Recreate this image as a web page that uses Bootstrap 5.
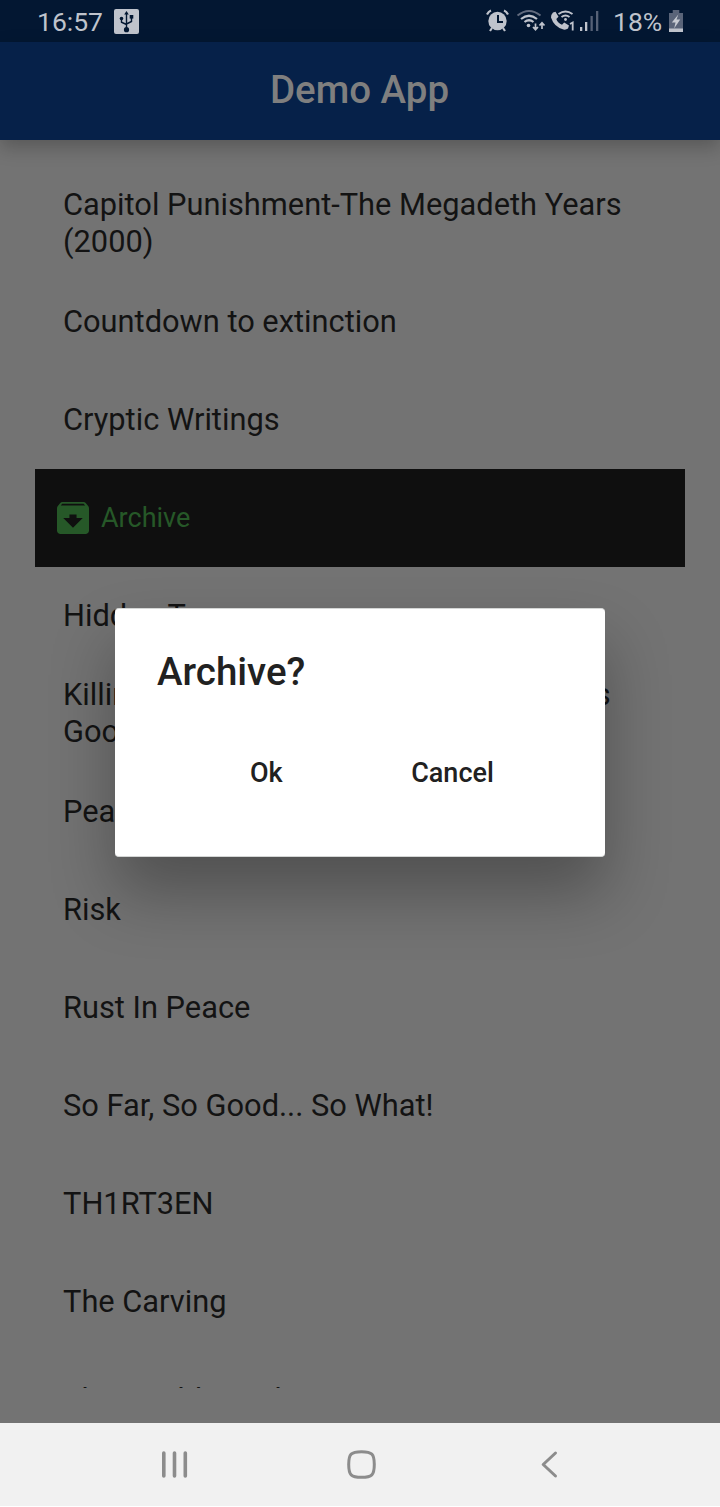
<!DOCTYPE html>
<html lang="en">
<head>
<meta charset="utf-8">
<meta name="viewport" content="width=device-width, initial-scale=1">
<title>Demo App</title>
<link href="https://cdn.jsdelivr.net/npm/bootstrap@5.3.0/dist/css/bootstrap.min.css" rel="stylesheet">
<style>
  body { font-family: Roboto, "Liberation Sans", sans-serif; background: #737373; color: #131313; height: 1507px; overflow: hidden; }
  .status-bar { height: 42px; background: #031732; color: #bfc3cc; font-size: 26.5px; line-height: 42px; }
  .status-bar span { padding-top: 2px; }
  .app-bar { height: 98px; padding-bottom: 2px; padding-right: 1px; background: #062149; color: #7f7f7f; font-size: 38.5px; font-weight: 500; z-index: 2;
    box-shadow: 0 7px 18px rgba(0,0,0,.24); }
  .album-list { height: 1248px; margin: 0 35px; padding-top: 35px; }
  .album { height: 98px; padding: 0 28px 2px; font-size: 30.8px; line-height: 37px; }
  .swiped { background: #0f0f0f; color: #265828; padding: 0 22px; font-size: 27px; }
  .confirm { left: 115px; top: 608px; width: 490px; height: 249px; border-radius: 4px; background: #fff; color: #212121; padding: 41px 42px;
    border-top: 1px solid #d4d6d5; border-bottom: 1px solid #d4d6d5;
    box-shadow: 0 36px 64px rgba(0,0,0,.3); }
  .confirm h1 { font-size: 38.5px; line-height: 44px; font-weight: 500; }
  .confirm .btn { font-size: 27px; line-height: 34px; font-weight: 500; color: #212121; border: 0; padding: 0; }
  .system-nav { height: 84px; background: #f1f1f1; border-bottom: 1px solid #fff; margin-top: 35px; }
</style>
</head>
<body class="d-flex flex-column">
<header class="status-bar d-flex align-items-center flex-shrink-0">
  <span style="margin-left:37px;width:77px">16:57</span>
  <svg width="25" height="25" viewBox="0 0 25 25"><rect width="25" height="25" rx="2" fill="#bfc3cc"/><g fill="none" stroke="#031732" stroke-width="1.4"><path d="M12.500 4v17M7.500 10v3.200l5 2.300M17.500 8v4.500l-5 2.500"/></g><g fill="#031732"><path d="M12.500 2l2.300 3.500h-4.600z"/><circle cx="12.500" cy="20.700" r="2.600"/><circle cx="7.500" cy="9.500" r="1.800"/><path d="M15.700 6h3.600v3.600h-3.600z"/></g></svg>
  <svg class="ms-auto" width="114" height="26" viewBox="486 8 114 26">
    <g stroke="#bfc3cc" fill="none">
      <path d="M487 14.500q1.500-3 4-4M504 10.500q2.500 1 4 4M490 31l2-3M505 31l-2-3" stroke-width="2.200"/>
      <circle cx="497.500" cy="21" r="9.200" fill="#bfc3cc" stroke="none"/>
      <path d="M498 15v7h5" stroke="#031732" stroke-width="2"/>
      <path d="M517.500 15.500q11.500-9 23 0" stroke="#626b7e" stroke-width="2"/>
      <path d="M521 19q8-6.500 16 0M524.500 22q4.500-3.500 9 0" stroke-width="2.200"/>
      <circle cx="528.500" cy="25.500" r="1.800" fill="#bfc3cc" stroke="none"/>
      <path d="M535.500 23.500v6M533 27l2.500 2.700 2.500-2.700M542 29v-6M539.500 25.500l2.500-2.700 2.500 2.700" stroke-width="1.700"/>
      <path d="M553 12.500l2.500-.7 3 5-2.200 2.200q1.500 4.200 5.700 5.700l2.200-2.200 4.800 3-1 3q-2 1.500-4.500 1-9.500-2.500-12.500-12 0-3 2-5z" fill="#bfc3cc" stroke="none"/>
      <path d="M558.500 14q7-5 14 0M561.500 17q4-3 8 0" stroke-width="1.900"/><circle cx="565.500" cy="19.500" r="1.400" fill="#bfc3cc" stroke="none"/>
      <path d="M570 24l2.700-1.500V30.500" stroke-width="1.800"/>
    </g>
    <g fill="#bfc3cc"><path d="M580 27h2.300v4H580zM585 22h2.300v9H585z"/><path fill="#566176" d="M590.500 16h2.300v15h-2.300zM596 11h2.300v20H596z"/></g>
  </svg>
  <span style="margin-left:13px;width:55px">18%</span>
  <svg style="margin-right:37px;margin-left:1px" width="14" height="22" viewBox="0 0 15 22" preserveAspectRatio="none"><path d="M4 0h7v3H15v16H0V3h4z" fill="#5a6479"/><path d="M0 18.500h15V22H0z" fill="#bfc3cc"/><path d="M10 4.500L3 12.500H7l-1.500 6 6.500-9H8z" fill="#c6cad2"/></svg>
</header>
<div class="app-bar position-relative d-flex align-items-center justify-content-center flex-shrink-0">Demo App</div>
<main class="album-list overflow-hidden flex-shrink-0">
  <div class="album d-flex align-items-center">Capitol Punishment-The Megadeth Years (2000)</div>
  <div class="album d-flex align-items-center">Countdown to extinction</div>
  <div class="album d-flex align-items-center">Cryptic Writings</div>
  <div class="album swiped d-flex align-items-center"><svg width="32" height="32" viewBox="3 3 18 18" class="me-2" fill="#265828"><path d="M20.540 5.230l-1.390-1.680C18.880 3.210 18.470 3 18 3H6c-.47 0-.88.21-1.160.55L3.460 5.230C3.170 5.570 3 6.020 3 6.500V19c0 1.100.9 2 2 2h14c1.100 0 2-.9 2-2V6.500c0-.48-.17-.93-.46-1.270zM12 17.500L6.500 12H10v-2h4v2h3.500L12 17.500zM5.120 5l.81-1h12l.94 1H5.120z"/></svg><span style="margin-left:4px">Archive</span></div>
  <div class="album d-flex align-items-center">Hidden Treasures</div>
  <div class="album d-flex align-items-center">Killing Is My Business... And Business Is Good!</div>
  <div class="album d-flex align-items-center">Peace Sells</div>
  <div class="album d-flex align-items-center">Risk</div>
  <div class="album d-flex align-items-center">Rust In Peace</div>
  <div class="album d-flex align-items-center">So Far, So Good... So What!</div>
  <div class="album d-flex align-items-center">TH1RT3EN</div>
  <div class="album d-flex align-items-center">The Carving</div>
  <div class="album d-flex align-items-center">The World Needs a Hero</div>
</main>
<nav class="system-nav flex-shrink-0">
  <svg class="d-block" width="720" height="83" viewBox="0 1423 720 83" fill="none" stroke="#8c8c8c" stroke-linecap="round" stroke-linejoin="round">
    <path d="M163.800 1453v23M174.500 1453v23M185.300 1453v23" stroke-width="3.600"/>
    <path d="M361.500 1451.700c10.500 0 12.800 2.300 12.800 12.800s-2.300 12.800-12.800 12.800-12.800-2.300-12.800-12.800 2.300-12.800 12.800-12.800z" stroke-width="3"/>
    <path d="M555.500 1453l-12.300 11.500 12.300 11.500" stroke-width="3"/>
  </svg>
</nav>
<div class="confirm position-absolute" style="z-index:5" role="dialog">
  <h1 class="m-0">Archive?</h1>
  <div class="d-flex" style="margin-top:62px;padding-left:93px;gap:128.5px"><button class="btn">Ok</button><button class="btn">Cancel</button></div>
</div>
<script src="https://cdn.jsdelivr.net/npm/bootstrap@5.3.0/dist/js/bootstrap.bundle.min.js"></script>
</body>
</html>
